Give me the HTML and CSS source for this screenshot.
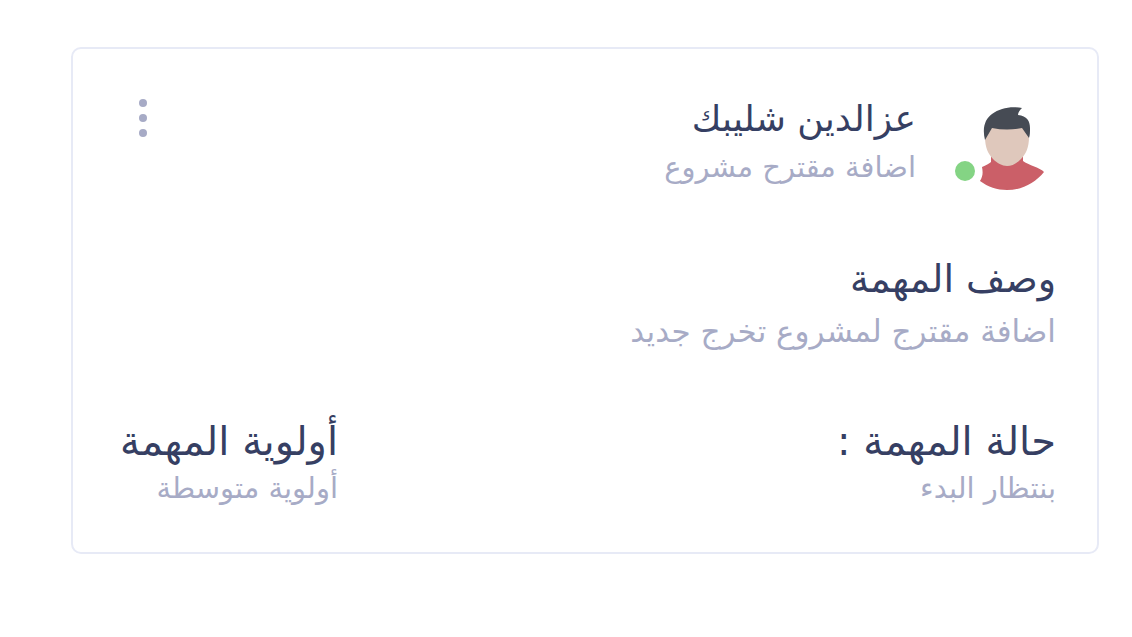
FILE: index.html
```html
<!DOCTYPE html>
<html lang="ar" dir="rtl">
<head>
<meta charset="utf-8">
<meta name="viewport" content="width=device-width, initial-scale=1">
<title>عزالدين شليبك</title>
<link rel="stylesheet" href="styles.css">
</head>
<body>
<main class="card">
  <header class="head">
    <div class="avatar">
      <svg class="portrait" viewBox="0 0 84 84" aria-hidden="true">
        <path fill="#cb5f68" d="M27 46v9c-2 2-5 3-9 5 1 5 1 9-2 14 8 6 17 9 27 9 15 0 28-7 37-18-3-4-16-7-21-11v-8z"/>
        <path fill="#dfc8bc" d="M21 30l6-12h32l6 12c0 10-3 17-8 22-4 4-9 7-14 7s-10-3-14-7c-5-5-8-12-8-22z"/>
        <path fill="#464b54" d="M21 33C18 21 21 12 28 7c8-6 19-8 30-6-2 2-4 4-4 7 9 1 12 6 12 13 0 4 0 7-1 10l-7-10c-10 2-20 2-30 0z"/>
      </svg>
      <span class="status"></span>
    </div>
    <div class="person">
      <h1 class="name">عزالدين شليبك</h1>
      <p class="role">اضافة مقترح مشروع</p>
    </div>
    <button class="menu" type="button" aria-label="خيارات"><span class="dot"></span><span class="dot"></span><span class="dot"></span></button>
  </header>
  <section class="description">
    <h2 class="label">وصف المهمة</h2>
    <p class="text">اضافة مقترج لمشروع تخرج جديد</p>
  </section>
  <div class="details">
    <section>
      <h2 class="title">حالة المهمة :</h2>
      <p class="value">بنتظار البدء</p>
    </section>
    <section class="priority">
      <h2 class="title">أولوية المهمة</h2>
      <p class="value">أولوية متوسطة</p>
    </section>
  </div>
</main>
</body>
</html>
```
FILE: styles.css
```css
* { box-sizing: border-box; }
body { margin: 0; padding: 47px 33px 83px 71px; background: #fff; color: #363f63; font-family: "DejaVu Sans", sans-serif; }
h1, h2, p { margin: 0; font-weight: 400; }
.card { padding: 48px 41px 41px 40px; border: 2px solid #e7eaf6; border-radius: 10px; background: #fff; }
.head { display: flex; align-items: flex-start; }
.avatar { position: relative; flex: none; width: 101px; padding: 10px 8px 0 0; }
.portrait { display: block; width: 84px; height: 84px; }
.status { position: absolute; left: 0; bottom: 10px; width: 20px; height: 20px; border-radius: 50%; background: #84d484; }
.person { margin-right: 39px; }
.name { font-size: 36px; line-height: 44px; }
.role { font-size: 29px; line-height: 52px; color: #a7abc6; }
.menu { display: flex; flex-direction: column; gap: 7px; margin-right: auto; margin-left: 26px; padding: 2px 0; border: 0; background: none; }
.dot { width: 8px; height: 8px; border-radius: 50%; background: #a7abc6; }
.description { margin-top: 60px; }
.label { font-size: 38px; line-height: 52px; }
.text { font-size: 31px; line-height: 52px; color: #a7abc6; }
.details { display: flex; justify-content: space-between; margin-top: 60px; }
.priority { min-width: 225px; }
.title { font-size: 40px; line-height: 48px; }
.value { font-size: 29px; line-height: 46px; color: #a7abc6; }
```
